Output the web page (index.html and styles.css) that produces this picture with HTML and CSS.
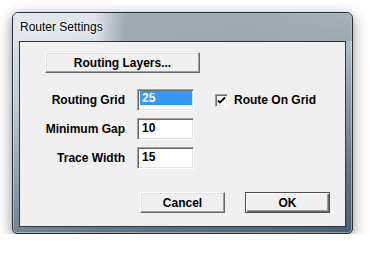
FILE: index.html
```html
<!DOCTYPE html>
<html lang="en">
<head>
	<meta charset="UTF-8">
	<title>Router Settings</title>
	<link rel="stylesheet" href="styles.css">
</head>
<body>
	<div class="window">
		<div class="titlebar">Router Settings</div>
		<div class="client">
			<button class="btn btn-layers">Routing Layers...</button>
			<div class="fields">
				<label class="field-label">Routing Grid</label>
				<div class="edit"><span class="sel">25</span></div>
				<div class="check-wrap">
					<span class="checkbox">
						<svg width="9" height="9" viewBox="0 0 9 9"><path d="M1 4.5 L3 6.5 L8 1.5" fill="none" stroke="#000" stroke-width="1.8"/></svg>
					</span>
					<span>Route On Grid</span>
				</div>

				<label class="field-label">Minimum Gap</label>
				<div class="edit">10</div>
				<div></div>

				<label class="field-label">Trace Width</label>
				<div class="edit">15</div>
				<div></div>
			</div>
			<div class="actions">
				<button class="btn">Cancel</button>
				<button class="btn btn-default">OK</button>
			</div>
		</div>
	</div>
</body>
</html>
```

FILE: styles.css
```css
*{margin:0;padding:0;box-sizing:border-box;}
body{
	background:#fff;
	font-family:"Liberation Sans", Arial, sans-serif;
	overflow:hidden;
}
.window{
	width:341px;
	height:222px;
	margin:12px 0 0 12px;
	border:1px solid #262c31;
	border-radius:6px 6px 5px 5px;
	padding:0 6px 6px;
	background:linear-gradient(165deg,#e3e9ee 0%,#c3cdd4 28%,#8d9ea9 55%,#5f7484 80%,#4a5f70 100%);
	box-shadow:0 4px 14px rgba(0,0,0,.45), inset 0 0 0 1px rgba(255,255,255,.4);
}
.titlebar{
	height:28px;
	margin:0 -6px;
	padding:7px 0 0 7px;
	font-size:12px;
	line-height:14px;
	color:#000;
	text-shadow:0 0 6px #fff, 0 0 3px #fff;
	background:linear-gradient(to right,rgba(225,231,236,.9) 0%,rgba(225,231,236,.6) 24%,rgba(120,130,138,.55) 33%,rgba(130,140,148,.6) 70%,rgba(140,150,158,.5) 100%);
	border-radius:5px 5px 0 0;
}
.client{
	height:186px;
	border:1px solid #30363b;
	background:#f0f0f0;
	padding:10px 0 0 25px;
	font-size:12px;
	font-weight:bold;
	color:#000;
}
.btn{
	display:block;
	height:21px;
	background:#f0f0f0;
	font-family:"Liberation Sans", Arial, sans-serif;
	font-size:12px;
	font-weight:bold;
	color:#000;
	border:1px solid;
	border-color:#fff #696969 #696969 #fff;
	box-shadow:inset -1px -1px 0 #a0a0a0, inset 1px 1px 0 #e3e3e3;
}
.btn-layers{
	width:155px;
}
.fields{
	display:grid;
	grid-template-columns:80px 57px 1fr;
	column-gap:12px;
	row-gap:7px;
	margin-top:16px;
	align-items:center;
}
.field-label{
	text-align:right;
	line-height:14px;
}
.edit{
	height:22px;
	background:#fff;
	border:1px solid;
	border-color:#a0a0a0 #fff #fff #a0a0a0;
	box-shadow:inset 1px 1px 0 #696969, inset -1px -1px 0 #e3e3e3;
	padding:2px 2px 0 4px;
	font-size:12px;
	line-height:14px;
}
.sel{
	display:block;
	margin:-1px -1px 0 -2px;
	padding-left:2px;
	height:14px;
	background:#3399ff;
	color:#fff;
}
.check-wrap{
	display:flex;
	align-items:center;
	gap:6px;
	padding-left:9px;
	line-height:14px;
}
.checkbox{
	width:13px;
	height:13px;
	background:#fff;
	border:1px solid;
	border-color:#a0a0a0 #fff #fff #a0a0a0;
	box-shadow:inset 1px 1px 0 #696969, inset -1px -1px 0 #e3e3e3;
	display:flex;
	align-items:center;
	justify-content:center;
}
.checkbox svg{
	display:block;
}
.actions{
	display:flex;
	justify-content:flex-end;
	gap:20px;
	margin-top:23px;
	padding-right:15px;
}
.actions .btn{
	width:85px;
}
.btn-default{
	border:1px solid #505050;
	box-shadow:inset 1px 1px 0 #fff, inset -1px -1px 0 #696969, inset -2px -2px 0 #a0a0a0;
}
```
